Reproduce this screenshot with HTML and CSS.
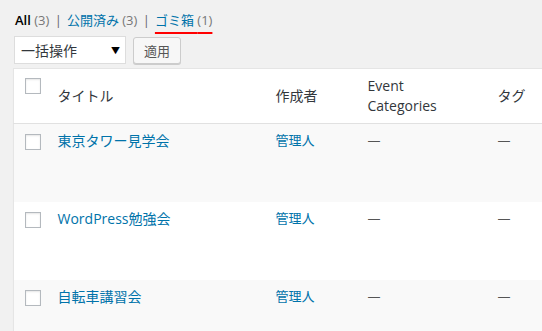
FILE: index.html
```html
<!DOCTYPE html>
<html lang="ja">
	<head>
		<meta charset="UTF-8" />
		<title>投稿一覧</title>
		<link rel="stylesheet" href="styles.css">
	</head>
	<body>
		<div class="wrap">
			<ul class="subsubsub">
				<li><a class="current" href="#">All <span class="count">(3)</span></a> |</li>
				<li><a href="#">公開済み <span class="count">(3)</span></a> |</li>
				<li><a class="marked" href="#">ゴミ箱 <span class="count">(1)</span></a></li>
			</ul>

			<div class="tablenav">
				<div class="select">一括操作<span class="select__arrow">▼</span></div>
				<button class="button">適用</button>
			</div>

			<table class="posts">
				<thead>
					<tr>
						<th class="col-cb"><span class="cb"></span></th>
						<th class="col-title">タイトル</th>
						<th class="col-author">作成者</th>
						<th class="col-event"><span class="event-label">Event Categories</span></th>
						<th class="col-tags">タグ</th>
					</tr>
				</thead>
				<tbody>
					<tr>
						<td class="col-cb"><span class="cb"></span></td>
						<td class="col-title"><a href="#">東京タワー見学会</a></td>
						<td class="col-author"><a href="#">管理人</a></td>
						<td class="col-event">—</td>
						<td class="col-tags">—</td>
					</tr>
					<tr>
						<td class="col-cb"><span class="cb"></span></td>
						<td class="col-title"><a href="#">WordPress勉強会</a></td>
						<td class="col-author"><a href="#">管理人</a></td>
						<td class="col-event">—</td>
						<td class="col-tags">—</td>
					</tr>
					<tr>
						<td class="col-cb"><span class="cb"></span></td>
						<td class="col-title"><a href="#">自転車講習会</a></td>
						<td class="col-author"><a href="#">管理人</a></td>
						<td class="col-event">—</td>
						<td class="col-tags">—</td>
					</tr>
				</tbody>
			</table>
		</div>
	</body>
</html>
```

FILE: styles.css
```css
html,
body {
	margin: 0;
	overflow: hidden;
	background-color: #f1f1f1;
	font-family: "Open Sans", "Noto Sans CJK JP", sans-serif;
	font-size: 13px;
	color: #444;
}
a {
	color: #0073aa;
	text-decoration: none;
}
.wrap {
	padding: 10px 0 0 13px;
}

/* status links */

.subsubsub {
	display: flex;
	gap: 5px;
	margin: 0;
	padding: 0 0 0 2px;
	list-style: none;
	line-height: 20px;
	color: #666;
}
.subsubsub li {
	white-space: nowrap;
}
.subsubsub a {
	margin-right: 2px;
}
.subsubsub a.current {
	font-weight: 600;
	color: #000;
}
.subsubsub .count {
	font-weight: 400;
	color: #777;
}
.subsubsub a.marked {
	text-decoration: underline 2px #f00;
	text-underline-offset: 7px;
}

/* bulk actions */

.tablenav {
	display: flex;
	gap: 6px;
	margin: 6px 0 4px 1px;
	height: 28px;
}
.select {
	display: flex;
	align-items: center;
	justify-content: space-between;
	box-sizing: border-box;
	width: 112px;
	padding: 0 5px 0 6px;
	background: #fff;
	border: 1px solid #ddd;
	font-size: 14px;
	color: #32373c;
}
.select__arrow {
	font-size: 9px;
	color: #000;
}
.button {
	box-sizing: border-box;
	height: 27px;
	margin: 1px 0 0 1px;
	padding: 0 10px;
	background: #f7f7f7;
	border: 1px solid #ccc;
	border-radius: 3px;
	box-shadow: 0 1px 0 #ccc;
	font-family: inherit;
	font-size: 13px;
	color: #555;
}

/* list table */

.posts {
	width: 620px;
	border-collapse: collapse;
	background: #fff;
	border: 1px solid #e5e5e5;
	box-shadow: 0 1px 1px rgba(0, 0, 0, 0.04);
	table-layout: fixed;
}
.posts th {
	box-sizing: border-box;
	height: 55px;
	padding: 0 10px;
	text-align: left;
	vertical-align: middle;
	font-weight: 400;
	font-size: 14px;
	line-height: 20px;
	color: #32373c;
	border-bottom: 1px solid #e1e1e1;
}
.posts td {
	height: 78px;
	box-sizing: border-box;
	padding: 7px 10px;
	vertical-align: top;
	font-size: 13px;
	line-height: 19px;
	color: #555;
}
.posts tbody tr:nth-child(odd) {
	background: #f9f9f9;
}
.posts .col-title a {
	font-size: 14px;
}
.posts .col-cb {
	width: 34px;
	padding: 0 0 0 11px;
}
.posts th.col-cb {
	vertical-align: top;
	padding-top: 9px;
}
.posts td.col-cb {
	padding-top: 10px;
}
.posts .col-title {
	width: 218px;
}
.posts .col-author {
	width: 92px;
}
.posts .col-event {
	width: 130px;
}
.event-label {
	display: block;
	width: 90px;
}
.cb {
	display: block;
	box-sizing: border-box;
	width: 16px;
	height: 16px;
	background: #fff;
	border: 1px solid #b4b9be;
	box-shadow: inset 0 1px 2px rgba(0, 0, 0, 0.1);
}
```
